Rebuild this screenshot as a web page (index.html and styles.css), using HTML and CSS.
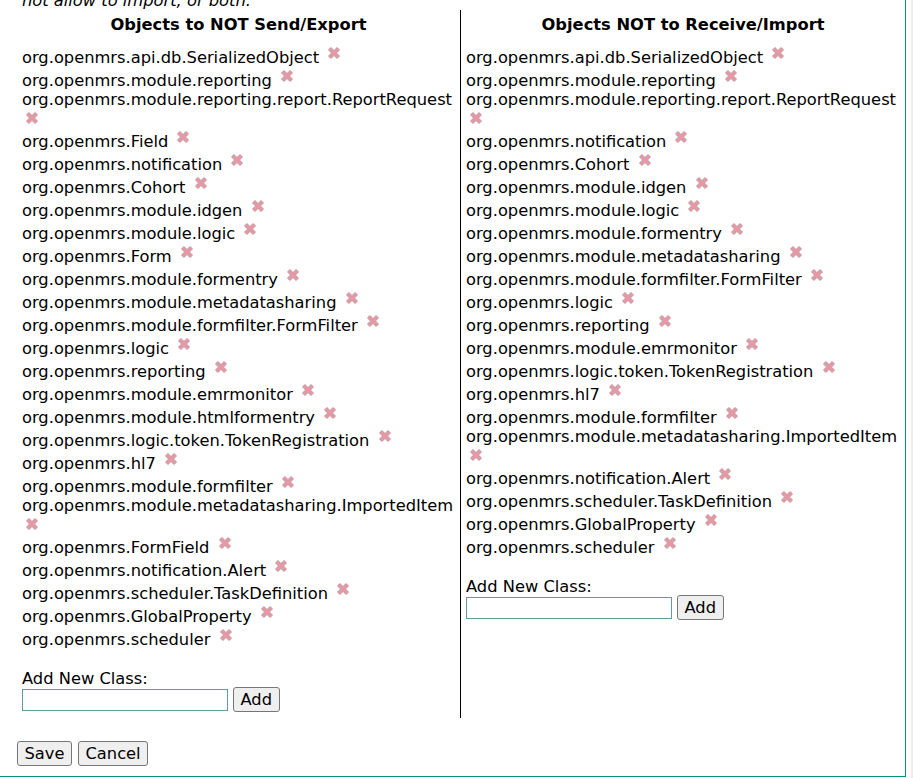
FILE: index.html
```
<html>
<head>
<meta charset="utf-8">
<title>Sync settings</title>
<link rel="stylesheet" href="styles.css">
</head>
<body>
<svg class="defs" width="0" height="0"><symbol id="x" viewBox="0 0 20 19"><path class="x-outer" d="M5.5 4.5 L14.5 13.5 M14.5 4.5 L5.5 13.5"/><path class="x-inner" d="M5.5 4.5 L14.5 13.5 M14.5 4.5 L5.5 13.5"/></symbol></svg>
<div class="box">
  <p class="note">not allow to import, or both.</p>
  <div class="cols">
    <div class="col col-left">
      <h3 class="col-title">Objects to NOT Send/Export</h3>
      <div class="list">
        <div class="item">org.openmrs.api.db.SerializedObject <svg class="del"><use href="#x"/></svg></div>
        <div class="item">org.openmrs.module.reporting <svg class="del"><use href="#x"/></svg></div>
        <div class="item">org.openmrs.module.reporting.report.ReportRequest <svg class="del"><use href="#x"/></svg></div>
        <div class="item">org.openmrs.Field <svg class="del"><use href="#x"/></svg></div>
        <div class="item">org.openmrs.notification <svg class="del"><use href="#x"/></svg></div>
        <div class="item">org.openmrs.Cohort <svg class="del"><use href="#x"/></svg></div>
        <div class="item">org.openmrs.module.idgen <svg class="del"><use href="#x"/></svg></div>
        <div class="item">org.openmrs.module.logic <svg class="del"><use href="#x"/></svg></div>
        <div class="item">org.openmrs.Form <svg class="del"><use href="#x"/></svg></div>
        <div class="item">org.openmrs.module.formentry <svg class="del"><use href="#x"/></svg></div>
        <div class="item">org.openmrs.module.metadatasharing <svg class="del"><use href="#x"/></svg></div>
        <div class="item">org.openmrs.module.formfilter.FormFilter <svg class="del"><use href="#x"/></svg></div>
        <div class="item">org.openmrs.logic <svg class="del"><use href="#x"/></svg></div>
        <div class="item">org.openmrs.reporting <svg class="del"><use href="#x"/></svg></div>
        <div class="item">org.openmrs.module.emrmonitor <svg class="del"><use href="#x"/></svg></div>
        <div class="item">org.openmrs.module.htmlformentry <svg class="del"><use href="#x"/></svg></div>
        <div class="item">org.openmrs.logic.token.TokenRegistration <svg class="del"><use href="#x"/></svg></div>
        <div class="item">org.openmrs.hl7 <svg class="del"><use href="#x"/></svg></div>
        <div class="item">org.openmrs.module.formfilter <svg class="del"><use href="#x"/></svg></div>
        <div class="item">org.openmrs.module.metadatasharing.ImportedItem <svg class="del"><use href="#x"/></svg></div>
        <div class="item">org.openmrs.FormField <svg class="del"><use href="#x"/></svg></div>
        <div class="item">org.openmrs.notification.Alert <svg class="del"><use href="#x"/></svg></div>
        <div class="item">org.openmrs.scheduler.TaskDefinition <svg class="del"><use href="#x"/></svg></div>
        <div class="item">org.openmrs.GlobalProperty <svg class="del"><use href="#x"/></svg></div>
        <div class="item">org.openmrs.scheduler <svg class="del"><use href="#x"/></svg></div>
      </div>
      <div class="add">
        <div class="add-label">Add New Class:</div>
        <div class="add-row"><input class="add-input" type="text"><button class="btn">Add</button></div>
      </div>
    </div>
    <div class="col col-right">
      <h3 class="col-title">Objects NOT to Receive/Import</h3>
      <div class="list">
        <div class="item">org.openmrs.api.db.SerializedObject <svg class="del"><use href="#x"/></svg></div>
        <div class="item">org.openmrs.module.reporting <svg class="del"><use href="#x"/></svg></div>
        <div class="item">org.openmrs.module.reporting.report.ReportRequest <svg class="del"><use href="#x"/></svg></div>
        <div class="item">org.openmrs.notification <svg class="del"><use href="#x"/></svg></div>
        <div class="item">org.openmrs.Cohort <svg class="del"><use href="#x"/></svg></div>
        <div class="item">org.openmrs.module.idgen <svg class="del"><use href="#x"/></svg></div>
        <div class="item">org.openmrs.module.logic <svg class="del"><use href="#x"/></svg></div>
        <div class="item">org.openmrs.module.formentry <svg class="del"><use href="#x"/></svg></div>
        <div class="item">org.openmrs.module.metadatasharing <svg class="del"><use href="#x"/></svg></div>
        <div class="item">org.openmrs.module.formfilter.FormFilter <svg class="del"><use href="#x"/></svg></div>
        <div class="item">org.openmrs.logic <svg class="del"><use href="#x"/></svg></div>
        <div class="item">org.openmrs.reporting <svg class="del"><use href="#x"/></svg></div>
        <div class="item">org.openmrs.module.emrmonitor <svg class="del"><use href="#x"/></svg></div>
        <div class="item">org.openmrs.logic.token.TokenRegistration <svg class="del"><use href="#x"/></svg></div>
        <div class="item">org.openmrs.hl7 <svg class="del"><use href="#x"/></svg></div>
        <div class="item">org.openmrs.module.formfilter <svg class="del"><use href="#x"/></svg></div>
        <div class="item">org.openmrs.module.metadatasharing.ImportedItem <svg class="del"><use href="#x"/></svg></div>
        <div class="item">org.openmrs.notification.Alert <svg class="del"><use href="#x"/></svg></div>
        <div class="item">org.openmrs.scheduler.TaskDefinition <svg class="del"><use href="#x"/></svg></div>
        <div class="item">org.openmrs.GlobalProperty <svg class="del"><use href="#x"/></svg></div>
        <div class="item">org.openmrs.scheduler <svg class="del"><use href="#x"/></svg></div>
      </div>
      <div class="add">
        <div class="add-label">Add New Class:</div>
        <div class="add-row"><input class="add-input" type="text"><button class="btn">Add</button></div>
      </div>
    </div>
  </div>
  <div class="actions"><button class="btn">Save</button><button class="btn">Cancel</button></div>
</div>
</body>
</html>
```
FILE: styles.css
```
html {
  background: linear-gradient(to right, #ffffff 911px, #ececec 911px);
  overflow: hidden;
}
body {
  margin: 0;
  font-family: "DejaVu Sans", Verdana, sans-serif;
  font-size: 16.3px;
  line-height: 19px;
  color: #000;
}
.defs {
  position: absolute;
  width: 0;
  height: 0;
}
.x-outer {
  fill: none;
  stroke: #bba9ac;
  stroke-width: 4.4;
}
.x-inner {
  fill: none;
  stroke: #e997a5;
  stroke-width: 2.6;
}
.box {
  box-sizing: border-box;
  width: 906px;
  padding: 0 0 10px 17px;
  border-right: 1px solid #009384;
  border-bottom: 1px solid #009384;
}
.note {
  margin: -9px 0 0 5px;
  font-style: italic;
}
.cols {
  display: flex;
}
.col {
  box-sizing: border-box;
  padding: 5px 5px 6px;
  display: flex;
  flex-direction: column;
}
.col-left {
  flex: 0 0 444px;
  border-right: 1px solid #000;
}
.col-right {
  flex: 1 1 auto;
  min-width: 0;
}
.col-title {
  margin: 0 0 10px;
  font-size: 16.3px;
  font-weight: bold;
  text-align: center;
}
.del {
  width: 20px;
  height: 19px;
  vertical-align: baseline;
  cursor: pointer;
}
.add {
  margin-top: 21px;
}
.add-label {
  line-height: 17px;
}
.add-row {
  display: flex;
  align-items: center;
  gap: 5px;
}
.add-input {
  box-sizing: border-box;
  width: 206px;
  height: 22px;
  margin: 0;
  padding: 1px 2px;
  border: 1px solid #5f9ea0;
  font-family: inherit;
  font-size: 16.3px;
}
.btn {
  box-sizing: border-box;
  height: 25px;
  margin: 0;
  padding: 2px 6.5px;
  background: #efefef;
  border: 1px solid #767676;
  border-radius: 3px;
  font-family: "DejaVu Sans", Verdana, sans-serif;
  font-size: 16.3px;
  line-height: 19px;
  color: #000;
}
.actions {
  display: flex;
  gap: 6px;
  margin-top: 23px;
}
```
